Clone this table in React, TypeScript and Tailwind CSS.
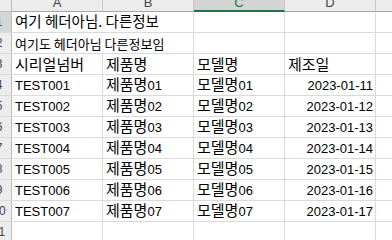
import React from "react";

const KR = "font-['Noto_Sans_CJK_KR',sans-serif]";
const LAT = "font-['Liberation_Sans','Noto_Sans_CJK_KR',sans-serif]";

const rows = [1, 2, 3, 4, 5, 6, 7];

function Mixed({ kr, num }: { kr: string; num: string }) {
  return (
    <span className="whitespace-nowrap">
      <span className={`${KR} text-[15px]`}>{kr}</span>
      <span className={`${LAT} text-[13px]`}>{num}</span>
    </span>
  );
}

function Cell({
  children,
  right,
  last,
  wide,
}: {
  children?: React.ReactNode;
  right?: boolean;
  last?: boolean;
  wide?: boolean;
}) {
  const w = last ? "flex-1" : wide ? "w-[182px] border-r" : "w-[91px] border-r";
  return (
    <div
      className={`${w} shrink-0 border-[#dadada] flex items-end overflow-visible whitespace-nowrap leading-none pb-[3px] ${
        right ? "justify-end pr-[2px]" : "pl-[3px]"
      }`}
    >
      {children}
    </div>
  );
}

function RowHead({ n, sel }: { n: number; sel?: boolean }) {
  return (
    <div
      className={`w-[12px] shrink-0 overflow-hidden border-r border-[#bdbdbd] ${
        sel ? "bg-[#d6d6d6]" : "bg-[#ececec]"
      }`}
    >
      <div
        className={`w-[24px] ml-[-13px] h-full flex items-center justify-center ${LAT} text-[12px] ${
          sel ? "text-[#217346]" : "text-[#444]"
        }`}
      >
        {n}
      </div>
    </div>
  );
}

function Row({
  n,
  children,
  sel,
}: {
  n: number;
  children: React.ReactNode;
  sel?: boolean;
}) {
  return (
    <div className="flex h-[21px] border-b border-[#dadada]">
      <RowHead n={n} sel={sel} />
      {children}
    </div>
  );
}

export default function App() {
  return (
    <div className="w-[392px] h-[240px] overflow-hidden bg-white text-black">
      {/* column headers */}
      <div className="flex h-[12px] bg-[#ececec]">
        <div className="w-[12px] shrink-0 border-r border-b border-[#bdbdbd] bg-[#ececec]" />
        {["A", "B", "C", "D"].map((c) => (
          <div
            key={c}
            className={`w-[91px] shrink-0 border-r border-[#c8c8c8] overflow-hidden flex justify-center ${
              c === "C"
                ? "bg-[#d4d4d4] border-b-2 border-b-[#217346] text-[#217346]"
                : "border-b border-b-[#a8a8a8] text-[#444]"
            }`}
          >
            <span className={`${LAT} text-[13px] leading-none mt-[-4px]`}>{c}</span>
          </div>
        ))}
        <div className="flex-1 border-b border-[#a8a8a8]" />
      </div>

      <Row n={1} sel>
        <Cell wide>
          <span className={`${KR} text-[14.5px] relative top-[-1px]`}>여기 헤더아님. 다른정보</span>
        </Cell>
        <Cell />
        <Cell />
        <Cell last />
      </Row>
      <Row n={2}>
        <Cell wide>
          <span className={`${KR} text-[13px]`}>여기도 헤더아님 다른정보임</span>
        </Cell>
        <Cell />
        <Cell />
        <Cell last />
      </Row>
      <Row n={3}>
        <Cell>
          <span className={`${KR} text-[15px]`}>시리얼넘버</span>
        </Cell>
        <Cell>
          <span className={`${KR} text-[15px]`}>제품명</span>
        </Cell>
        <Cell>
          <span className={`${KR} text-[15px]`}>모델명</span>
        </Cell>
        <Cell>
          <span className={`${KR} text-[15px]`}>제조일</span>
        </Cell>
        <Cell last />
      </Row>
      {rows.map((i) => (
        <Row key={i} n={i + 3}>
          <Cell>
            <span className={`${LAT} text-[13px]`}>TEST00{i}</span>
          </Cell>
          <Cell>
            <Mixed kr="제품명" num={`0${i}`} />
          </Cell>
          <Cell>
            <Mixed kr="모델명" num={`0${i}`} />
          </Cell>
          <Cell right>
            <span className={`${LAT} text-[13px]`}>2023-01-1{i}</span>
          </Cell>
          <Cell last />
        </Row>
      ))}
      <Row n={11}>
        <Cell />
        <Cell />
        <Cell />
        <Cell />
        <Cell last />
      </Row>
    </div>
  );
}
